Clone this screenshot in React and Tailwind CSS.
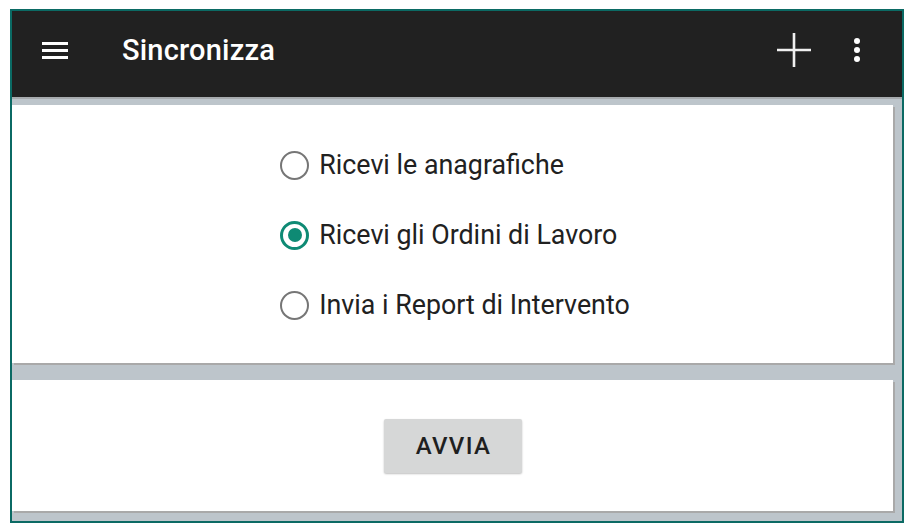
import React from "react";

function Radio({ checked, label }) {
  return (
    <div className="flex items-center h-[70px]">
      {checked ? (
        <div className="w-[29px] h-[29px] rounded-full border-[3px] border-[#0e8a74] flex items-center justify-center">
          <div className="w-[14px] h-[14px] rounded-full bg-[#0e8a74]" />
        </div>
      ) : (
        <div className="w-[29px] h-[29px] rounded-full border-[2.5px] border-[#767676]" />
      )}
      <span className="ml-[10px] text-[26.8px] text-[#212121] leading-none">{label}</span>
    </div>
  );
}

export default function App() {
  return (
    <div
      className="w-[912px] h-[530px] bg-white pt-[9px] pl-[10px] pr-[8px] pb-[7px]"
      style={{ fontFamily: "Roboto, 'Liberation Sans', sans-serif" }}
    >
      <div className="h-full border-2 border-[#0b6a64] bg-[#bdc5cb] flex flex-col">
        <div className="h-[86px] shrink-0 bg-[#212121] flex items-center pb-[8px] shadow-[0_2px_0_#a7abae] relative z-10">
          <div className="ml-[30px] w-[26px] flex flex-col gap-[4px]">
            <div className="h-[3px] bg-white" />
            <div className="h-[3px] bg-white" />
            <div className="h-[3px] bg-white" />
          </div>
          <div className="ml-[54px] text-white text-[29px] font-medium tracking-[0.2px] leading-none">Sincronizza</div>
          <div className="flex-1" />
          <svg width="36" height="36" viewBox="0 0 36 36" className="mr-[41px]">
            <path d="M18 1v34M1 18h34" stroke="#f0f0f0" strokeWidth="2.6" />
          </svg>
          <svg width="8" height="24" viewBox="0 0 8 24" className="mr-[41px]">
            <circle cx="4" cy="3" r="3" fill="#fff" />
            <circle cx="4" cy="12" r="3" fill="#fff" />
            <circle cx="4" cy="21" r="3" fill="#fff" />
          </svg>
        </div>
        <div className="mt-[8px] mr-[9px] h-[258px] shrink-0 bg-white shadow-[2px_2px_0_#a9a9a9] pt-[25px] flex justify-center">
          <div className="flex flex-col items-start pl-[5px]">
            <Radio label="Ricevi le anagrafiche" />
            <Radio checked label="Ricevi gli Ordini di Lavoro" />
            <Radio label="Invia i Report di Intervento" />
          </div>
        </div>
        <div className="mt-[17px] mr-[9px] h-[131px] shrink-0 bg-white shadow-[2px_2px_0_#a9a9a9] flex items-center justify-center">
          <div className="w-[138px] h-[54px] bg-[#d6d7d7] rounded-[2px] shadow-[0_1px_2px_rgba(0,0,0,0.25)] flex items-center justify-center text-[24px] font-medium text-[#1f1f1f] tracking-[1.3px] pl-[2px]">
            AVVIA
          </div>
        </div>
      </div>
    </div>
  );
}
